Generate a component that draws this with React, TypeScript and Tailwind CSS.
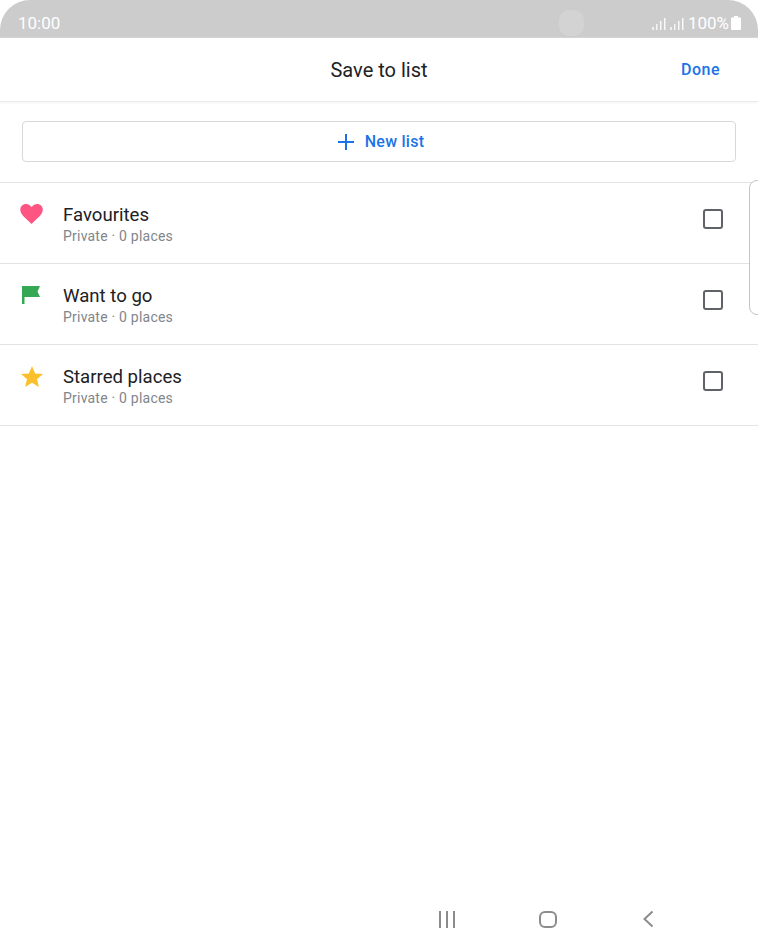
import React from "react";

const lists = [
  { name: "Favourites", icon: "heart" },
  { name: "Want to go", icon: "flag" },
  { name: "Starred places", icon: "star" },
];

function ListIcon({ icon }: { icon: string }) {
  if (icon === "heart") {
    return (
      <svg width="24" height="24" viewBox="0 0 24 24">
        <path
          fill="#ff5582"
          transform="translate(-0.1 0.6) scale(0.97 0.96)"
          d="M12 22.2l-1.6-1.5C4.6 15.5.4 11.900.4 7.300.4 3.900 3 1.400 6.300 1.400c1.900 0 3.100.8 4.300 1.900L12 4.600l1.400-1.300c1.200-1.100 2.400-1.900 4.300-1.900 3.300 0 5.900 2.500 5.900 5.900 0 4.600-4.200 8.200-10 13.400L12 22.200z"
        />
      </svg>
    );
  }
  if (icon === "flag") {
    return (
      <svg width="24" height="24" viewBox="0 0 24 24">
        <path fill="#34a853" d="M2 3h18l-2.500 5.500L20 14H4.500v7H2V3z" />
      </svg>
    );
  }
  return (
    <svg width="24" height="24" viewBox="0 0 24 24">
      <path
        fill="#fbc02d"
        d="M12 2l3.100 7.400 7.900.6-6 5.200 1.900 7.800L12 18.800l-6.900 4.200L7 15.200 1 10l7.900-.6L12 2z"
      />
    </svg>
  );
}

function Signal() {
  return (
    <svg width="15" height="13" viewBox="0 0 15 13" fill="#ffffff">
      <rect x="0" y="10" width="2" height="3" opacity="0.7" />
      <rect x="4" y="7" width="1.500" height="6" opacity="0.8" />
      <rect x="8" y="4" width="1.500" height="9" opacity="0.85" />
      <rect x="12" y="1" width="1.500" height="12" opacity="0.85" />
    </svg>
  );
}

export default function App() {
  return (
    <div className="relative flex h-[946px] w-[758px] flex-col overflow-hidden bg-white font-['Roboto',sans-serif]">
      {/* status bar */}
      <div className="flex h-[38px] shrink-0 items-center rounded-t-[30px] border-b border-[#d4d4d4] bg-[#cccccc] pr-[17px] pl-[18px] pt-[9px] text-white">
        <span className="text-[17px] leading-[20px]">10:00</span>
        <div className="ml-[499px] h-[26px] w-[25px] rounded-[10px] bg-[#d3d3d3]" />
        <div className="ml-auto flex items-center">
          <div className="flex items-center gap-[3px]">
            <Signal />
            <Signal />
          </div>
          <span className="ml-[3px] text-[17px] leading-[20px]">100%</span>
          <svg className="ml-[2px]" width="10" height="14" viewBox="0 0 10 14" fill="#ffffff">
            <path d="M3 0h4v1.500h2a1 1 0 0 1 1 1V13a1 1 0 0 1-1 1H1a1 1 0 0 1-1-1V2.500a1 1 0 0 1 1-1h2V0z" />
          </svg>
        </div>
      </div>

      {/* header */}
      <div className="relative flex h-[64px] shrink-0 items-center justify-center border-b border-[#ebebeb] shadow-[0_1px_2px_rgba(0,0,0,0.05)]">
        <span className="text-[20px] leading-[28px] text-[#202124]">Save to list</span>
        <span className="absolute right-[38px] text-[16px] leading-[24px] font-medium tracking-[0.5px] text-[#1a73e8]">Done</span>
      </div>

      {/* new list */}
      <div className="px-[22px] pt-[19px] pb-[20px]">
        <div className="flex h-[41px] w-[714px] items-center justify-center gap-[10px] rounded-[4px] border border-[#d6d8dc] pl-[3px]">
          <svg width="18" height="18" viewBox="0 0 18 18" fill="#1a73e8">
            <path d="M8 1h2v7h7v2h-7v7H8v-7H1V8h7V1z" />
          </svg>
          <span className="text-[16px] leading-[24px] font-medium tracking-[0.25px] text-[#1a73e8]">New list</span>
        </div>
      </div>

      {/* lists */}
      <div className="border-t border-[#e3e3e6]">
        {lists.map((list) => (
          <div key={list.name} className="flex h-[81px] items-start border-b border-[#e3e3e6]">
            <div className="mt-[19px] ml-[20px] w-[43px] shrink-0">
              <ListIcon icon={list.icon} />
            </div>
            <div className="mt-[20px] flex flex-col">
              <span className="text-[18.6px] leading-[24px] text-[#202124]">{list.name}</span>
              <span className="text-[14px] leading-[18px] tracking-[0.22px] text-[#80868b]">Private · 0 places</span>
            </div>
            <div className="mt-[26px] mr-[35px] ml-auto h-[20px] w-[20px] rounded-[3px] border-2 border-[#5f6368]" />
          </div>
        ))}
      </div>

      {/* edge panel handle */}
      <div className="absolute top-[180px] right-[-10px] h-[135px] w-[19px] rounded-[8px] border border-[#c4c4c4] bg-white" />

      {/* nav bar */}
      <div className="absolute right-0 bottom-[17px] left-0 flex h-[20px] items-center">
        <div className="ml-[439px] flex gap-[5px]">
          <div className="h-[17px] w-[2px] bg-[#8c8c8c]" />
          <div className="h-[17px] w-[2px] bg-[#8c8c8c]" />
          <div className="h-[17px] w-[2px] bg-[#8c8c8c]" />
        </div>
        <div className="ml-[84px] h-[17px] w-[18px] rounded-[6px] border-2 border-[#8c8c8c]" />
        <svg className="ml-[85px]" width="12" height="18" viewBox="0 0 12 18" fill="none" stroke="#8c8c8c" strokeWidth="2">
          <path d="M10.500 1.500L2.500 9l8 7.500" />
        </svg>
      </div>
    </div>
  );
}
